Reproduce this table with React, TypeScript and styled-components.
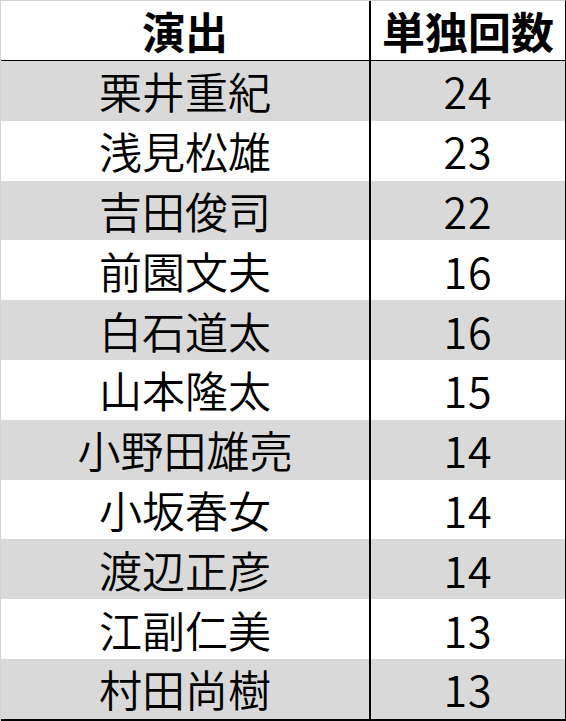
import React from "react";
import styled, { createGlobalStyle } from "styled-components";

const GlobalStyle = createGlobalStyle`
  html, body {
    margin: 0;
    padding: 0;
    background: #ffffff;
  }
  body {
    font-family: "Noto Sans CJK JP", "Noto Sans", sans-serif;
  }
`;

const Frame = styled.div`
  box-sizing: border-box;
  width: 566px;
  height: 721px;
  border-top: 1px solid #d4d4d4;
  border-left: 1px solid #d4d4d4;
  border-right: 1px solid #000000;
  display: flex;
  flex-direction: column;
  overflow: hidden;
`;

const Row = styled.div<{ $shaded?: boolean; $header?: boolean; $last?: boolean }>`
  box-sizing: border-box;
  display: grid;
  grid-template-columns: 370px 1fr;
  flex: none;
  height: ${(p) => (p.$header ? "60px" : p.$last ? "61.8px" : "59.8px")};
  background: ${(p) => (p.$shaded ? "#d9d9d9" : "#ffffff")};
  border-bottom: ${(p) =>
    p.$header ? "1px solid #000000" : p.$last ? "2px solid #000000" : "none"};
`;

const Cell = styled.div<{ $bold?: boolean; $divider?: boolean; $num?: boolean }>`
  box-sizing: border-box;
  display: flex;
  align-items: center;
  justify-content: center;
  font-family: "Noto Sans CJK JP", "Noto Sans", sans-serif;
  font-size: 43px;
  line-height: 1;
  font-weight: ${(p) => (p.$bold ? 700 : 350)};
  letter-spacing: ${(p) => (p.$num ? "1px" : "0")};
  color: #000000;
  border-right: ${(p) => (p.$divider ? "2px solid #000000" : "none")};
  white-space: nowrap;
`;

const data: [string, number][] = [
  ["栗井重紀", 24],
  ["浅見松雄", 23],
  ["吉田俊司", 22],
  ["前園文夫", 16],
  ["白石道太", 16],
  ["山本隆太", 15],
  ["小野田雄亮", 14],
  ["小坂春女", 14],
  ["渡辺正彦", 14],
  ["江副仁美", 13],
  ["村田尚樹", 13],
];

export default function App() {
  return (
    <>
      <GlobalStyle />
      <Frame>
        <Row $header>
          <Cell $bold $divider>
            演出
          </Cell>
          <Cell $bold>単独回数</Cell>
        </Row>
        {data.map(([name, count], i) => (
          <Row key={name} $shaded={i % 2 === 0} $last={i === data.length - 1}>
            <Cell $divider>{name}</Cell>
            <Cell $num>{count}</Cell>
          </Row>
        ))}
      </Frame>
    </>
  );
}
